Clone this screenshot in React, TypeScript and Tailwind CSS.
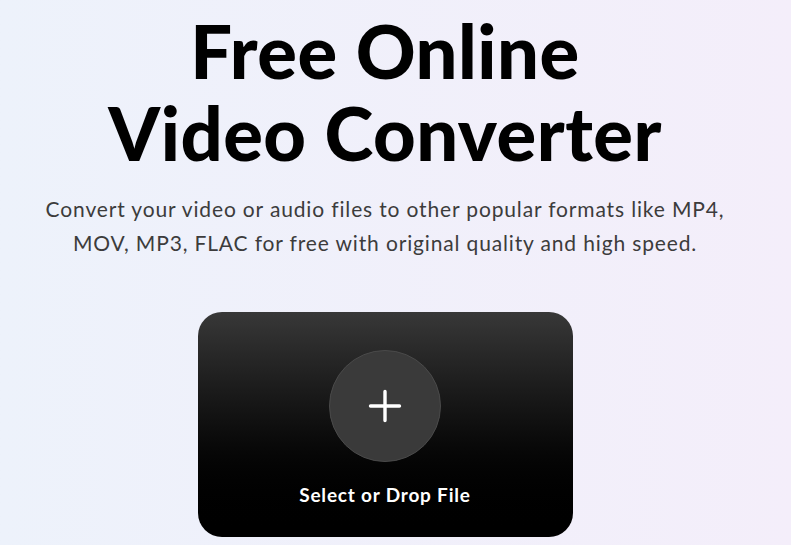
import React from "react";

export default function App() {
  return (
    <div
      className="w-[791px] h-[545px] overflow-hidden bg-gradient-to-r from-[#edf2fb] to-[#f4eefa]"
      style={{ fontFamily: "Lato, 'Noto Sans', sans-serif" }}
    >
      <div className="w-[770px] flex flex-col items-center">
        <h1 className="mt-[10px] text-center text-[74px] leading-[82px] font-black text-black tracking-[0.5px]">
          Free Online
          <br />
          Video Converter
        </h1>
        <p className="mt-[18px] text-center text-[21px] leading-[34px] tracking-[0.85px] text-[#3c3c3c] whitespace-nowrap">
          Convert your video or audio files to other popular formats like MP4,
          <br />
          MOV, MP3, FLAC for free with original quality and high speed.
        </p>
        <div className="mt-[52px] w-[375px] h-[225px] rounded-[24px] bg-gradient-to-b from-[#383838] to-[#000000] flex flex-col items-center">
          <div className="mt-[38px] w-[112px] h-[112px] rounded-full bg-[#3a3a3a] border border-[#4a4a4a] flex items-center justify-center">
            <svg width="34" height="34" viewBox="0 0 34 34" fill="none">
              <path d="M17 2.5v29M2.5 17h29" stroke="white" strokeWidth="3.4" strokeLinecap="round" />
            </svg>
          </div>
          <div className="mt-[19px] text-white text-[19px] font-bold tracking-[0.8px]">Select or Drop File</div>
        </div>
      </div>
    </div>
  );
}
